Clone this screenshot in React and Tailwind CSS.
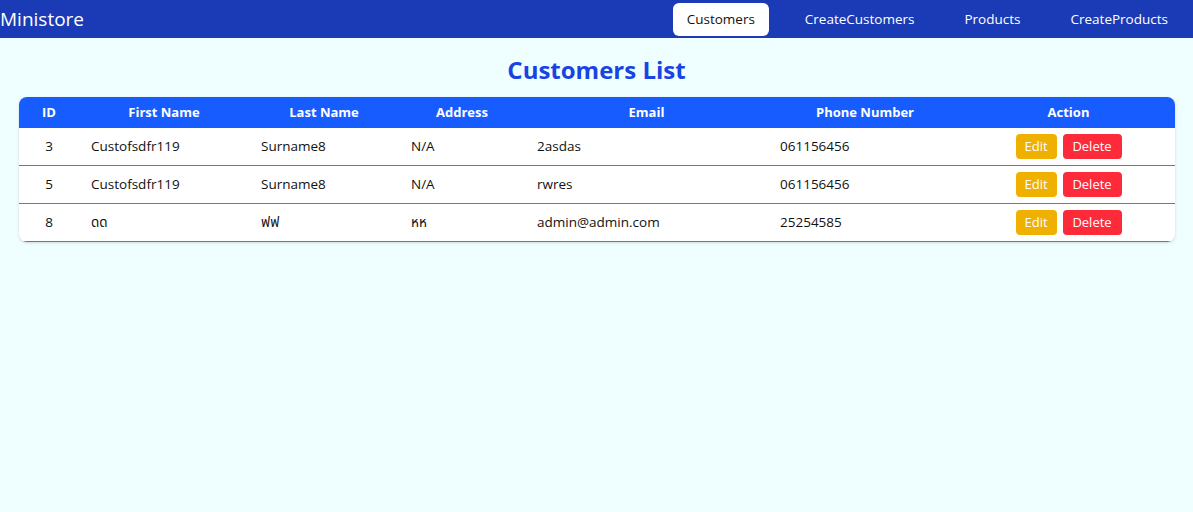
import React from "react";

const rows = [
  { id: 3, first: "Custofsdfr119", last: "Surname8", addr: "N/A", email: "2asdas", phone: "061156456" },
  { id: 5, first: "Custofsdfr119", last: "Surname8", addr: "N/A", email: "rwres", phone: "061156456" },
  { id: 8, first: "ดด", last: "ฟฟ", addr: "หห", email: "admin@admin.com", phone: "25254585" },
];

const cols = [
  { label: "ID", w: "w-[60px]" },
  { label: "First Name", w: "w-[170px]" },
  { label: "Last Name", w: "w-[150px]" },
  { label: "Address", w: "w-[126px]" },
  { label: "Email", w: "w-[243px]" },
  { label: "Phone Number", w: "w-[194px]" },
  { label: "Action", w: "w-[213px]" },
];

export default function App() {
  return (
    <div
      className="min-h-[512px] bg-[#effefe] text-[#111]"
      style={{ fontFamily: '"Open Sans", "Noto Sans", "Noto Sans Thai", sans-serif' }}
    >
      <nav className="h-[38px] bg-[#1a3bb5] flex items-center justify-between pr-[11px]">
        <div className="text-white text-[19px] leading-none">Ministore</div>
        <div className="flex items-center gap-[22px] text-[13.5px]">
          <div className="bg-white text-[#111] rounded-[6px] h-[33px] w-[96px] flex items-center justify-center">Customers</div>
          <div className="text-white px-[14px]">CreateCustomers</div>
          <div className="text-white px-[14px]">Products</div>
          <div className="text-white px-[14px]">CreateProducts</div>
        </div>
      </nav>
      <h1 className="text-center text-[#1744e3] font-bold text-[24px] leading-[30px] pt-[17px] pb-[12px]">
        Customers List
      </h1>
      <div className="mx-[19px] w-[1156px] rounded-[8px] overflow-hidden bg-white shadow-[0_1px_3px_rgba(0,0,0,0.15)]">
        <div className="flex h-[31px] bg-[#175cfe] text-white font-bold text-[13px] items-center">
          {cols.map((c) => (
            <div key={c.label} className={`${c.w} text-center`}>{c.label}</div>
          ))}
        </div>
        {rows.map((r) => (
          <div key={r.id} className="flex h-[38px] items-center border-b border-[#777] text-[13.5px]">
            <div className="w-[60px] text-center">{r.id}</div>
            <div className="w-[170px] px-[12px]">{r.first}</div>
            <div className="w-[150px] px-[12px]">{r.last}</div>
            <div className="w-[126px] px-[12px]">{r.addr}</div>
            <div className="w-[243px] px-[12px]">{r.email}</div>
            <div className="w-[194px] px-[12px]">{r.phone}</div>
            <div className="w-[213px] flex justify-center gap-[6px]">
              <button className="h-[25px] w-[41px] rounded-[4px] bg-[#efb000] text-white text-[13px]">Edit</button>
              <button className="h-[25px] w-[59px] rounded-[4px] bg-[#fd2a39] text-white text-[13px]">Delete</button>
            </div>
          </div>
        ))}
      </div>
    </div>
  );
}
